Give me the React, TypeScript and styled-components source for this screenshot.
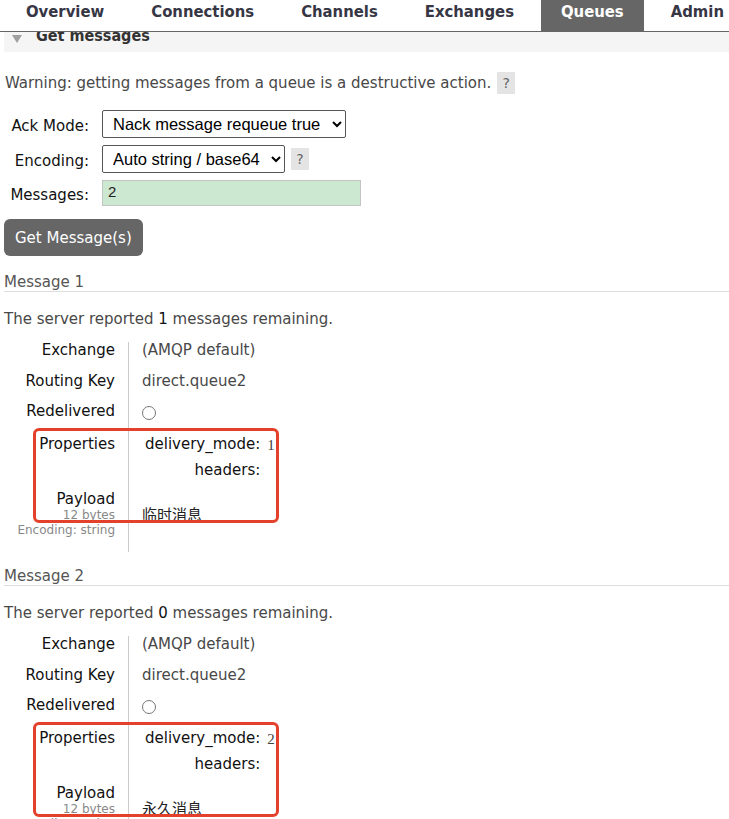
import styled, { createGlobalStyle } from "styled-components";

const GlobalStyle = createGlobalStyle`
  html, body {
    margin: 0;
    padding: 0;
    background: #fff;
  }
  body {
    font-family: "DejaVu Sans", Verdana, sans-serif;
    font-size: 15px;
    color: #484848;
  }
`;

const Page = styled.div`
  width: 729px;
  height: 819px;
  overflow: hidden;
`;

const Nav = styled.ul`
  display: flex;
  margin: 0;
  padding: 0 0 0 6px;
  list-style: none;
  border-bottom: 1px solid #666;
  height: 31px;
  gap: 7px;
`;

const Tab = styled.li<{ $active?: boolean }>`
  padding: 0 20px;
  height: 31px;
  line-height: 24px;
  font-family: "DejaVu Sans Condensed", "DejaVu Sans", sans-serif;
  font-weight: bold;
  font-size: 16.5px;
  color: ${(p) => (p.$active ? "#fff" : "#363644")};
  background: ${(p) => (p.$active ? "#666" : "transparent")};
`;

const SectionBar = styled.div`
  margin-left: 4px;
  height: 20px;
  background: #f5f5f5;
  overflow: hidden;
  display: flex;
  align-items: flex-start;
`;

const SectionTitle = styled.h2`
  margin: -6px 0 0 0;
  font-size: 16px;
  font-family: "DejaVu Sans Condensed", "DejaVu Sans", sans-serif;
  font-weight: bold;
  color: #333;
  line-height: 20px;
  display: flex;
  align-items: center;
`;

const Arrow = styled.span`
  width: 0;
  height: 0;
  margin: 6px 14px 0 8px;
  border-left: 5px solid transparent;
  border-right: 5px solid transparent;
  border-top: 8px solid #a0a0a0;
`;

const Content = styled.div`
  padding: 0 0 0 5px;
`;

const Warning = styled.p`
  margin: 20px 0 0;
  display: flex;
  align-items: center;
  gap: 6px;
  line-height: 22px;
`;

const Help = styled.span`
  display: inline-block;
  width: 18px;
  height: 22px;
  line-height: 22px;
  text-align: center;
  background: #e4e4e4;
  color: #666;
  font-size: 14px;
`;

const Form = styled.div`
  margin-top: 16px;
  display: grid;
  grid-template-columns: 84px auto;
  column-gap: 13px;
  row-gap: 7px;
  align-items: center;
  justify-items: start;
`;

const FormLabel = styled.label`
  justify-self: end;
  color: #111;
  font-size: 15px;
  padding-top: 4px;
`;

const FieldRow = styled.div`
  display: flex;
  align-items: center;
  gap: 6px;
`;

const Select = styled.select<{ $w: number }>`
  width: ${(p) => p.$w}px;
  height: 28px;
  font-family: "Liberation Sans", Arial, sans-serif;
  font-size: 16.5px;
  color: #000;
  background: #fff;
  border: 1px solid #555;
  border-radius: 2px;
  padding: 0 4px 0 6px;
`;

const NumberInput = styled.input`
  width: 259px;
  height: 26px;
  box-sizing: border-box;
  background: #cde8d1;
  border: 1px solid #c4c4c4;
  font-family: "Liberation Sans", Arial, sans-serif;
  font-size: 15px;
  color: #222;
  padding: 0 5px 4px;
`;

const Button = styled.button`
  margin: 13px 0 0 -1px;
  height: 37px;
  padding: 0 11px;
  border: none;
  border-radius: 6px;
  background: #666;
  color: #fff;
  font-family: "DejaVu Sans", Verdana, sans-serif;
  font-size: 15px;
`;

const MessageBlock = styled.section`
  margin-top: 18px;
  & + & {
    margin-top: 16px;
  }
`;

const MessageTitle = styled.h3`
  margin: 0 0 0 -1px;
  padding-bottom: 0;
  font-weight: normal;
  font-size: 15px;
  color: #555;
  border-bottom: 1px solid #ddd;
  line-height: 17px;
`;

const Remaining = styled.p`
  margin: 18px 0 0 -1px;
  line-height: 18px;
  b {
    font-weight: normal;
    color: #111;
  }
`;

const Details = styled.div`
  position: relative;
  margin-top: 14px;
  display: grid;
  grid-template-columns: 123px 1fr;
`;

const Label = styled.div<{ $pb?: number }>`
  text-align: right;
  padding: 0 13px ${(p) => p.$pb ?? 14}px 0;
  color: #111;
  line-height: 17px;
`;

const Value = styled.div<{ $pb?: number }>`
  border-left: 1px solid #ccc;
  padding: 0 0 ${(p) => p.$pb ?? 14}px 13px;
  line-height: 17px;
  color: #484848;
`;

const Sub = styled.div`
  font-size: 12px;
  line-height: 15px;
  color: #888;
`;

const Radio = styled.span`
  display: block;
  width: 12px;
  height: 12px;
  margin-top: 3px;
  border: 1px solid #777;
  border-radius: 50%;
`;

const Props = styled.div`
  display: grid;
  grid-template-columns: auto auto;
  column-gap: 7px;
  row-gap: 8px;
  justify-content: start;
  margin-left: 3px;
  line-height: 17px;
`;

const PropKey = styled.span`
  text-align: right;
  color: #111;
`;

const PropVal = styled.span`
  font-family: "Liberation Serif", "DejaVu Serif", serif;
  font-size: 15px;
  line-height: 17px;
  color: #444;
  padding-top: 1px;
`;

const Payload = styled.pre`
  margin: 16px 0 0;
  font-family: "DejaVu Sans", "Noto Sans CJK SC", sans-serif;
  font-size: 15px;
  line-height: 17px;
  color: #222;
`;

const Highlight = styled.div`
  position: absolute;
  left: 28px;
  top: 86px;
  width: 240px;
  height: 89px;
  border: 3px solid #e3412b;
  border-radius: 6px;
  pointer-events: none;
`;

type Msg = {
  n: number;
  remaining: number;
  mode: number;
  payload: string;
};

const messages: Msg[] = [
  { n: 1, remaining: 1, mode: 1, payload: "临时消息" },
  { n: 2, remaining: 0, mode: 2, payload: "永久消息" },
];

function Message({ m }: { m: Msg }) {
  return (
    <MessageBlock>
      <MessageTitle>Message {m.n}</MessageTitle>
      <Remaining>
        The server reported <b>{m.remaining}</b> messages remaining.
      </Remaining>
      <Details>
        <Label>Exchange</Label>
        <Value>(AMQP default)</Value>
        <Label $pb={13}>Routing Key</Label>
        <Value $pb={13}>direct.queue2</Value>
        <Label $pb={16}>Redelivered</Label>
        <Value $pb={16}>
          <Radio />
        </Value>
        <Label $pb={38}>Properties</Label>
        <Value $pb={5}>
          <Props>
            <PropKey>delivery_mode:</PropKey>
            <PropVal>{m.mode}</PropVal>
            <PropKey>headers:</PropKey>
            <PropVal />
          </Props>
        </Value>
        <Label>
          Payload
          <Sub>12 bytes</Sub>
          <Sub>Encoding: string</Sub>
        </Label>
        <Value>
          <Payload>{m.payload}</Payload>
        </Value>
        <Highlight />
      </Details>
    </MessageBlock>
  );
}

export default function App() {
  return (
    <Page>
      <GlobalStyle />
      <Nav>
        <Tab>Overview</Tab>
        <Tab>Connections</Tab>
        <Tab>Channels</Tab>
        <Tab>Exchanges</Tab>
        <Tab $active>Queues</Tab>
        <Tab>Admin</Tab>
      </Nav>
      <SectionBar>
        <SectionTitle>
          <Arrow />
          Get messages
        </SectionTitle>
      </SectionBar>
      <Content>
        <Warning>
          Warning: getting messages from a queue is a destructive action.
          <Help>?</Help>
        </Warning>
        <Form>
          <FormLabel>Ack Mode:</FormLabel>
          <Select $w={244} defaultValue="nack">
            <option value="nack">Nack message requeue true</option>
          </Select>
          <FormLabel>Encoding:</FormLabel>
          <FieldRow>
            <Select $w={183} defaultValue="auto">
              <option value="auto">Auto string / base64</option>
            </Select>
            <Help>?</Help>
          </FieldRow>
          <FormLabel>Messages:</FormLabel>
          <NumberInput defaultValue="2" />
        </Form>
        <Button>Get Message(s)</Button>
        {messages.map((m) => (
          <Message key={m.n} m={m} />
        ))}
      </Content>
    </Page>
  );
}
